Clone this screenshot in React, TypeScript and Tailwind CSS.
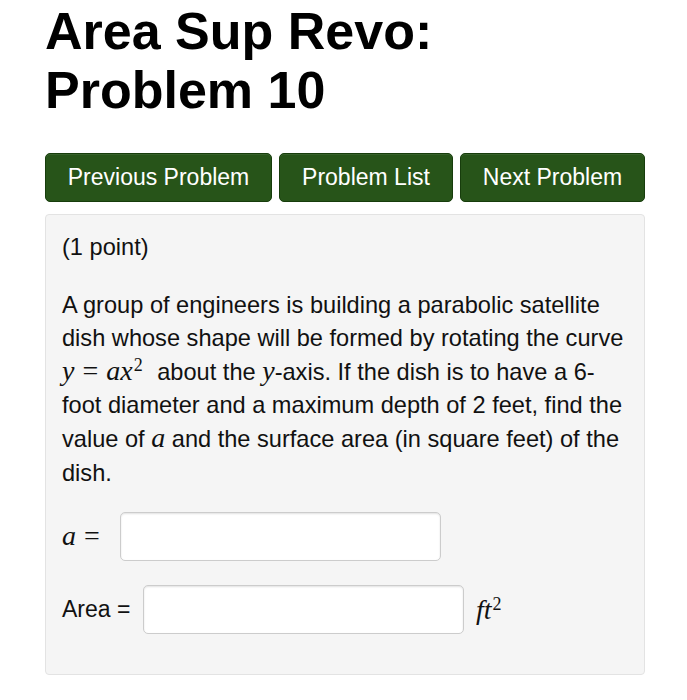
import React from "react";

const sans = "font-['Liberation_Sans','Helvetica',Arial,sans-serif]";
const serif = "font-['Liberation_Serif','Times_New_Roman',serif] italic";

function NavButton({ label, className }: { label: string; className?: string }) {
  return (
    <button
      className={`h-[49px] rounded-[5px] border border-[#173d0c] bg-[#275419] text-[23px] text-white shadow-[inset_0_1px_0_rgba(255,255,255,0.08)] ${className ?? ""}`}
    >
      {label}
    </button>
  );
}

function AnswerBox() {
  return (
    <input
      type="text"
      className="h-[49px] w-[321px] rounded-[5px] border border-[#cccccc] bg-white shadow-[inset_0_1px_2px_rgba(0,0,0,0.12)] outline-none"
    />
  );
}

// MathJax-ish equals sign with thick spacing
function Eq() {
  return <span className="mx-[8px] font-['Liberation_Serif',serif] text-[28px] leading-none">=</span>;
}

export default function App() {
  return (
    <div className={`min-h-[700px] w-[687px] bg-white text-black ${sans}`}>
      <div className="pl-[45px] pr-[42px] pt-[2px]">
        <h1 className="text-[52px] font-bold leading-[59px]">
          Area Sup Revo:
          <br />
          Problem 10
        </h1>

        <div className="mt-[33px] flex gap-[7px]">
          <NavButton label="Previous Problem" className="w-[227px]" />
          <NavButton label="Problem List" className="w-[174px]" />
          <NavButton label="Next Problem" className="w-[185px]" />
        </div>

        <div className="mt-[12px] h-[461px] w-[600px] rounded-[4px] border border-[#e3e3e3] bg-[#f5f5f5] px-[16px] pt-[16px] text-[23.6px] leading-[33.6px] text-[#111]">
          <p>(1 point)</p>
          <p className="mt-[24px]">
            A group of engineers is building a parabolic satellite dish whose shape will be formed by
            rotating the curve{" "}
            <span className="mr-[8px] whitespace-nowrap">
              <span className={`${serif} text-[28px] leading-none`}>y</span>
              <Eq />
              <span className={`${serif} text-[28px] leading-none`}>
                ax<sup className="ml-[1px] not-italic text-[18px] font-['Liberation_Serif',serif]">2</sup>
              </span>
            </span>{" "}
            about the <span className={`${serif} text-[28px] leading-none`}>y</span>-axis. If the dish
            is to have a 6-foot diameter and a maximum depth of 2 feet, find the value of{" "}
            <span className={`${serif} text-[28px] leading-none`}>a</span> and the surface area (in
            square feet) of the dish.
          </p>

          <div className="mt-[22px] flex items-center">
            <span className="w-[58px] shrink-0">
              <span className={`${serif} text-[28px]`}>a</span>
              <Eq />
            </span>
            <AnswerBox />
          </div>

          <div className="mt-[24px] flex items-center">
            <span className="w-[81px] shrink-0 text-[23px]">Area =</span>
            <AnswerBox />
            <span className={`${serif} ml-[12px] text-[28px]`}>
              ft<sup className="ml-[1px] not-italic text-[18px] font-['Liberation_Serif',serif]">2</sup>
            </span>
          </div>
        </div>
      </div>
    </div>
  );
}
